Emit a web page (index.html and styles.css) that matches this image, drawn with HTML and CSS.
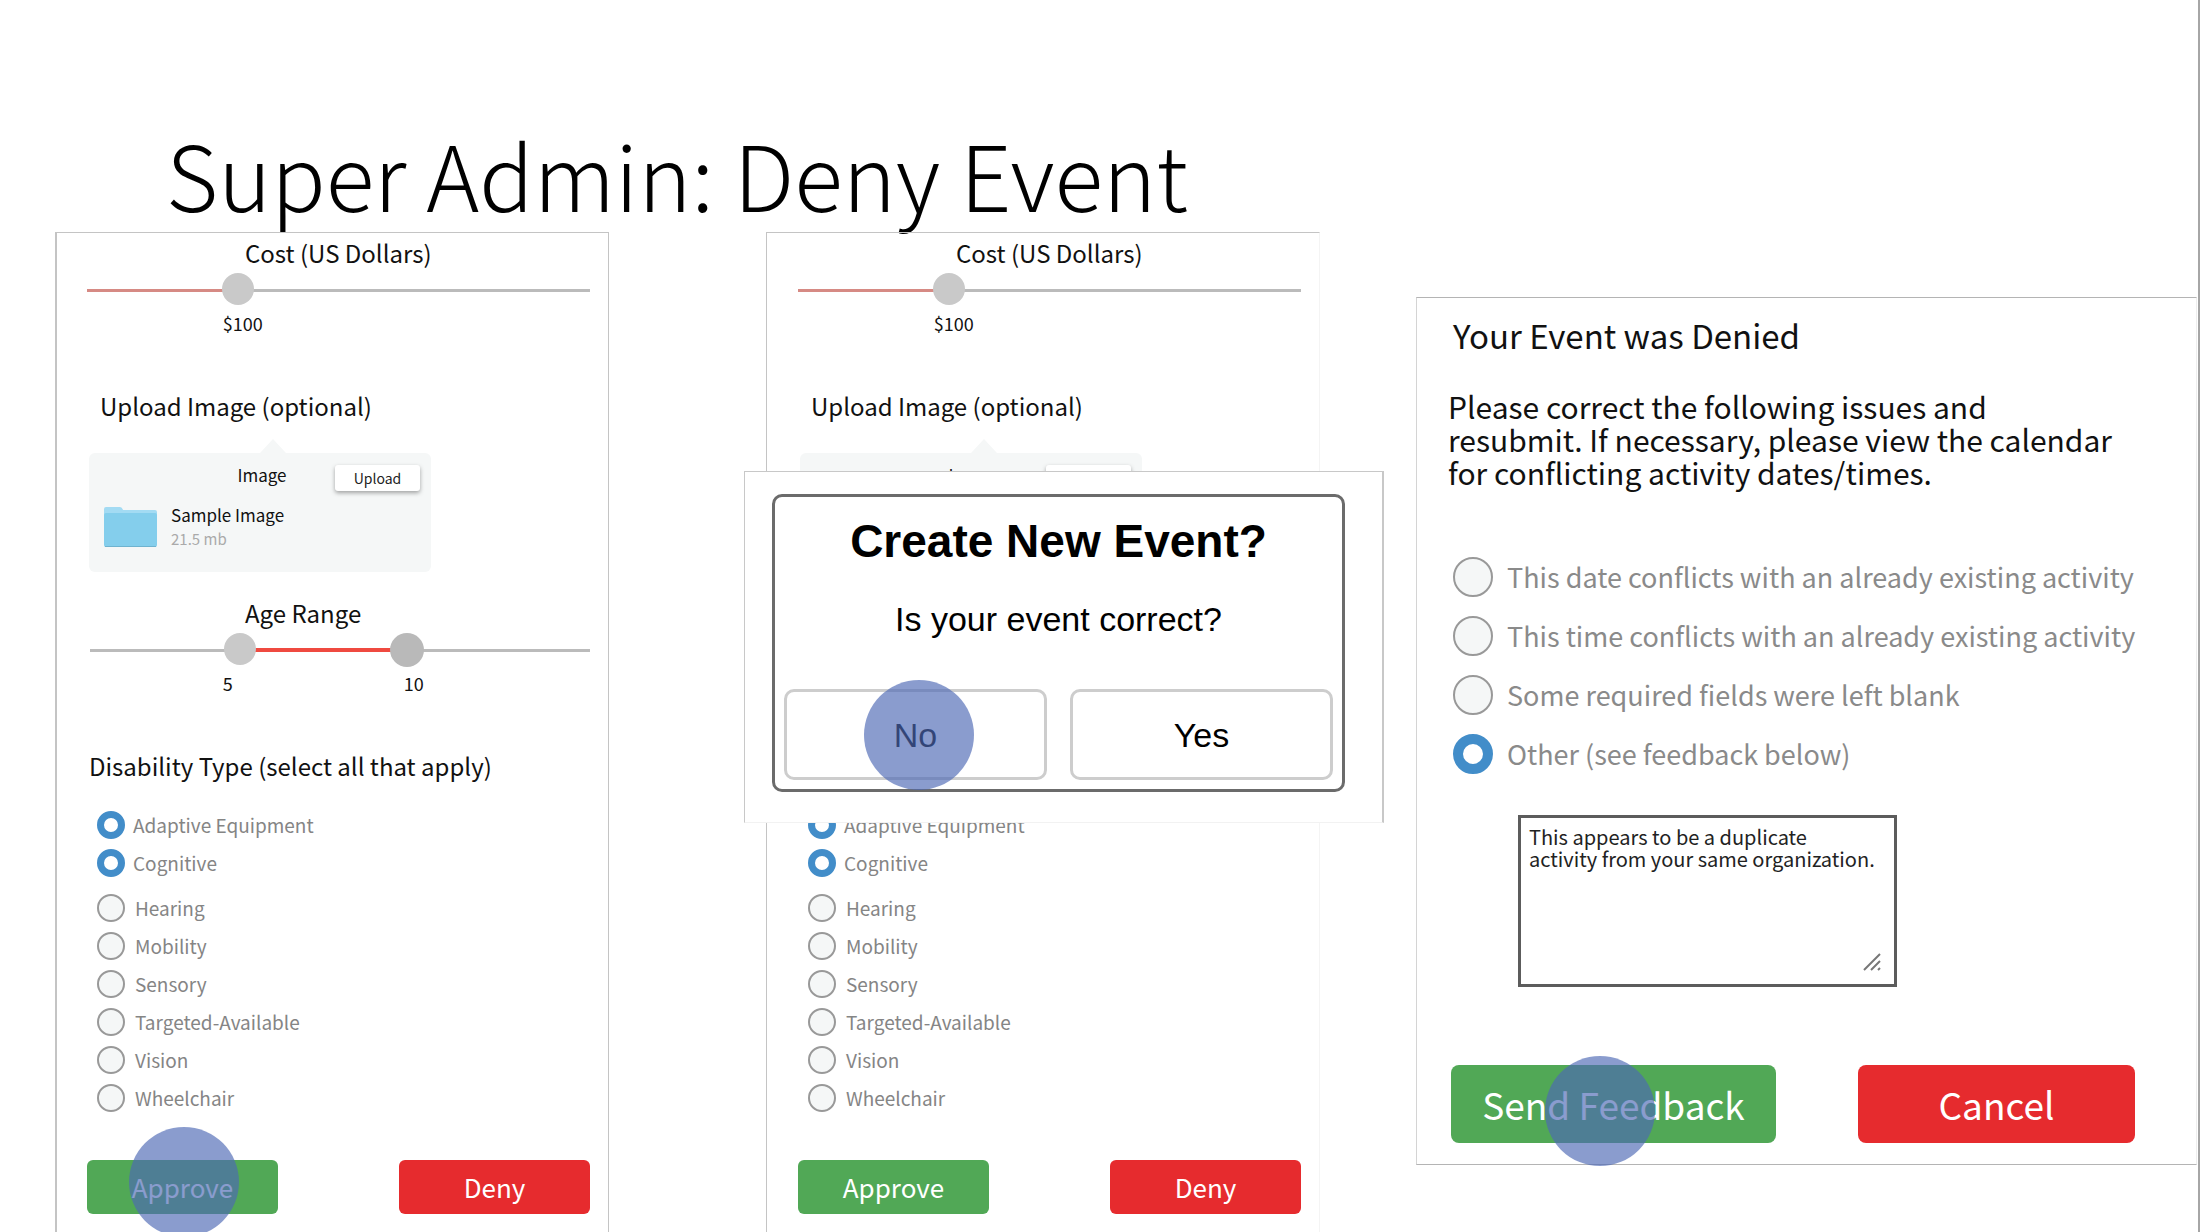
FILE: index.html
```html
<!DOCTYPE html>
<html lang="en">
<head>
<meta charset="utf-8">
<title>Super Admin: Deny Event</title>
<link rel="stylesheet" href="styles.css">
</head>
<body>
<main class="slide">
  <h1 class="slide-title">Super Admin: Deny Event</h1>
  <div class="screens">

    <form class="panel panel-first">
      <label class="heading heading-slider" for="cost-a">Cost (US Dollars)</label>
      <div class="range"><input class="slider slider-cost" id="cost-a" type="range" min="0" max="350" value="100"></div>
      <div class="values"><span>$100</span></div>
      <h2 class="heading heading-upload">Upload Image (optional)</h2>
      <div class="card">
        <div class="card-head"><span class="card-title">Image</span><button class="upload" type="button">Upload</button></div>
        <div class="file">
          <svg class="folder" viewBox="0 0 53 42" aria-hidden="true"><path class="folder-tab" d="M0 3Q0 1 2 1H16Q18 1 19 4H51Q53 4 53 6V14H0Z"/><rect class="folder-body" y="7" width="53" height="34" rx="2"/><path class="folder-edge" d="M1 40.500H52"/></svg>
          <div class="file-text"><span class="file-name">Sample Image</span><span class="file-size">21.5 mb</span></div>
        </div>
      </div>
      <h2 class="heading heading-slider heading-age">Age Range</h2>
      <div class="range range-double">
        <input class="slider slider-age-from" type="range" min="1" max="15" value="5" aria-label="Youngest age">
        <input class="slider slider-age-to" type="range" min="1" max="15" value="10" aria-label="Oldest age">
      </div>
      <div class="values"><span class="value-from">5</span><span>10</span></div>
      <h2 class="heading heading-types">Disability Type (select all that apply)</h2>
      <div class="options">
        <label class="option option-on"><input class="tick" type="checkbox" checked>Adaptive Equipment</label>
        <label class="option option-on option-last-on"><input class="tick" type="checkbox" checked>Cognitive</label>
        <label class="option"><input class="tick" type="checkbox">Hearing</label>
        <label class="option"><input class="tick" type="checkbox">Mobility</label>
        <label class="option"><input class="tick" type="checkbox">Sensory</label>
        <label class="option"><input class="tick" type="checkbox">Targeted-Available</label>
        <label class="option"><input class="tick" type="checkbox">Vision</label>
        <label class="option"><input class="tick" type="checkbox">Wheelchair</label>
      </div>
      <div class="actions">
        <button class="action approve" type="button">Approve<span class="tap"></span></button>
        <button class="action deny" type="button">Deny</button>
      </div>
    </form>

    <form class="panel panel-second">
      <label class="heading heading-slider" for="cost-b">Cost (US Dollars)</label>
      <div class="range"><input class="slider slider-cost" id="cost-b" type="range" min="0" max="350" value="100"></div>
      <div class="values"><span>$100</span></div>
      <h2 class="heading heading-upload">Upload Image (optional)</h2>
      <div class="card">
        <div class="card-head"><span class="card-title">Image</span><button class="upload" type="button">Upload</button></div>
      </div>
      <div class="options options-covered">
        <label class="option option-on"><input class="tick" type="checkbox" checked>Adaptive Equipment</label>
        <label class="option option-on option-last-on"><input class="tick" type="checkbox" checked>Cognitive</label>
        <label class="option"><input class="tick" type="checkbox">Hearing</label>
        <label class="option"><input class="tick" type="checkbox">Mobility</label>
        <label class="option"><input class="tick" type="checkbox">Sensory</label>
        <label class="option"><input class="tick" type="checkbox">Targeted-Available</label>
        <label class="option"><input class="tick" type="checkbox">Vision</label>
        <label class="option"><input class="tick" type="checkbox">Wheelchair</label>
      </div>
      <div class="actions">
        <button class="action approve" type="button">Approve</button>
        <button class="action deny" type="button">Deny</button>
      </div>
      <section class="overlay" role="dialog" aria-labelledby="ask">
        <div class="dialog">
          <h2 class="dialog-title" id="ask">Create New Event?</h2>
          <p class="dialog-text">Is your event correct?</p>
          <div class="dialog-actions">
            <button class="choice" type="button">No<span class="tap tap-choice"></span></button>
            <button class="choice" type="button">Yes</button>
          </div>
        </div>
      </section>
    </form>

    <form class="denied">
      <h2 class="denied-title">Your Event was Denied</h2>
      <p class="denied-text">Please correct the following issues and<br>resubmit. If necessary, please view the calendar<br>for conflicting activity dates/times.</p>
      <div class="reasons">
        <label class="reason"><input class="tick tick-large" type="radio" name="reason">This date conflicts with an already existing activity</label>
        <label class="reason"><input class="tick tick-large" type="radio" name="reason">This time conflicts with an already existing activity</label>
        <label class="reason"><input class="tick tick-large" type="radio" name="reason">Some required fields were left blank</label>
        <label class="reason"><input class="tick tick-large" type="radio" name="reason" checked>Other (see feedback below)</label>
      </div>
      <div class="feedback">
        <textarea class="feedback-box" aria-label="Feedback">This appears to be a duplicate
activity from your same organization.</textarea>
        <svg class="grip" viewBox="0 0 18 18" aria-hidden="true"><path d="M1 17L17 1M8 17L17 8M15 17L17 15"/></svg>
      </div>
      <div class="denied-actions">
        <button class="big approve" type="button">Send Feedback<span class="tap tap-send"></span></button>
        <button class="big deny" type="button">Cancel</button>
      </div>
    </form>

  </div>
</main>
</body>
</html>
```
FILE: styles.css
```css
* { box-sizing: border-box; }

body {
  margin: 0;
  background: #fff;
  color: #111;
  font-family: "Noto Sans CJK SC", "Open Sans", sans-serif;
}

h1, h2, p { margin: 0; font-weight: 400; }

button, textarea { font-family: inherit; }

.slide {
  min-height: 100vh;
  overflow: clip;
  padding-top: 120px;
  border-right: 2px solid #a6a6a6;
}

.slide-title {
  height: 112px;
  padding-left: 166px;
  color: #000;
  font-size: 90px;
  font-weight: 300;
  line-height: 106px;
  white-space: nowrap;
}

.screens {
  display: grid;
  grid-template-columns:
    minmax(0, 55fr) minmax(0, 554fr) minmax(0, 157fr) minmax(0, 554fr)
    minmax(0, 96fr) minmax(0, 781fr) minmax(0, 1fr);
  align-items: start;
}

/* Event form, shown twice */
.panel {
  position: relative;
  padding: 4px 18px 18px 31px;
  border: 1px solid #c4c4c4;
  border-bottom: 0;
}
.panel-first { grid-column: 2; border-left-width: 2px; padding-left: 30px; }
.panel-second { grid-column: 4; border-right-color: #f4f4f4; }

.heading {
  display: block;
  font-size: 24px;
  line-height: 32px;
  white-space: nowrap;
}
.heading-slider { margin-left: 158px; }
.heading-upload { margin: 55px 0 31px 13px; }
.heading-age { margin-top: 25px; }
.heading-types { margin: 55px 0 29px 2px; }

.range { display: grid; height: 34px; margin: 4px 0; }
.range-double { margin-left: 3px; }

.slider {
  grid-area: 1 / 1;
  width: 100%;
  height: 34px;
  margin: 0;
  appearance: none;
  background: none;
}
.slider::-webkit-slider-runnable-track {
  display: flex;
  align-items: center;
  height: 34px;
  background: linear-gradient(#bbb, #bbb) center / 100% 3px no-repeat;
}
.slider::-webkit-slider-thumb {
  width: 32px;
  height: 32px;
  appearance: none;
  border-radius: 50%;
  background: #c9c9c9;
}
.slider-cost::-webkit-slider-runnable-track {
  background:
    linear-gradient(90deg, #d68a84 30%, #bbb 30%) center / 100% 3px no-repeat;
}
.slider-age-from::-webkit-slider-runnable-track {
  background:
    linear-gradient(90deg, transparent 32%, #ef4a40 32% 62%, transparent 62%) center / 100% 4px no-repeat,
    linear-gradient(#bbb, #bbb) center / 100% 3px no-repeat;
}
.slider-age-to { pointer-events: none; }
.slider-age-to::-webkit-slider-runnable-track { background: none; }
.slider-age-to::-webkit-slider-thumb {
  width: 34px;
  height: 34px;
  background: #b9b9b9;
  pointer-events: auto;
}

.values {
  display: flex;
  padding-left: 27%;
  font-size: 18px;
  line-height: 24px;
}
.value-from { width: 181px; }

.card {
  position: relative;
  width: 342px;
  height: 119px;
  margin-left: 2px;
  padding: 12px 11px 0 15px;
  border-radius: 6px;
  background: #f5f7f7;
}
.card::before {
  content: "";
  position: absolute;
  left: 171px;
  top: -14px;
  width: 26px;
  height: 14px;
  background: #f5f7f7;
  clip-path: polygon(50% 0, 100% 100%, 0 100%);
}
.card-head { display: grid; grid-template-columns: 1fr auto 1fr; }
.card-title { grid-column: 2; font-size: 17px; line-height: 20px; }
.upload {
  grid-column: 3;
  justify-self: end;
  width: 85px;
  height: 26px;
  padding: 0;
  border: 0;
  border-radius: 3px;
  background: #fff;
  box-shadow: 0 2px 4px rgba(0, 0, 0, .35);
  color: #222;
  font-size: 14px;
  line-height: 26px;
}
.file { display: flex; align-items: center; gap: 14px; margin-top: 12px; }
.folder { width: 53px; height: 42px; }
.folder-tab { fill: #a3dbf3; }
.folder-body { fill: #84ceec; }
.folder-edge { stroke: #6fb3cf; stroke-width: 1; }
.file-text { display: flex; flex-direction: column; line-height: 24px; }
.file-name { font-size: 17px; }
.file-size { color: #aaa; font-size: 15px; }

.options {
  display: flex;
  flex-direction: column;
  align-items: start;
  gap: 10px;
  padding-left: 10px;
}
/* Clears the part of the form that the dialog hides */
.options-covered { margin-top: 239px; }
.option {
  display: flex;
  align-items: center;
  gap: 10px;
  height: 28px;
  color: #858585;
  font-size: 19px;
  line-height: 28px;
}
.option-on { gap: 8px; }
.option-last-on { margin-bottom: 7px; }

.tick {
  flex: none;
  width: 28px;
  height: 28px;
  margin: 0;
  appearance: none;
  border: 2px solid #999;
  border-radius: 50%;
  background: #f5f7f7;
}
.tick:checked { border: 7px solid #428dc9; background: #fff; }
.tick-large { width: 40px; height: 40px; }
.tick-large:checked { border-width: 10px; }

.actions { display: flex; justify-content: space-between; margin-top: 48px; }
.action {
  position: relative;
  width: 191px;
  height: 54px;
  padding: 0;
  border: 0;
  border-radius: 6px;
  color: #fff;
  font-size: 26px;
  line-height: 54px;
}
.approve { background: #51a856; }
.deny { background: #e62b2e; }

/* Tap marker laid over the pressed button */
.tap {
  position: absolute;
  left: 42px;
  top: -33px;
  width: 110px;
  height: 110px;
  border-radius: 50%;
  background: rgba(78, 104, 180, .66);
}
.tap-choice { left: 77px; top: -12px; }
.tap-send { left: 94px; top: -9px; }

/* Confirmation over the second form */
.overlay {
  position: absolute;
  left: -23px;
  top: 238px;
  width: 640px;
  padding: 22px 37px 30px 27px;
  border: 1px solid #c8c8c8;
  border-right-width: 2px;
  border-bottom-color: #f2f2f2;
  background: #fff;
  color: #000;
  font-family: "Liberation Sans", Arial, sans-serif;
  text-align: center;
}
.dialog { padding: 18px 9px 9px; border: 3px solid #6b6b6b; border-radius: 10px; }
.dialog-title { font-size: 46px; font-weight: 700; line-height: 52px; }
.dialog-text { margin-top: 32px; font-size: 34px; line-height: 40px; }
.dialog-actions {
  display: grid;
  grid-template-columns: 1fr 1fr;
  gap: 23px;
  margin-top: 50px;
}
.choice {
  position: relative;
  height: 91px;
  padding: 2px 0 0;
  border: 3px solid #cdcdcd;
  border-radius: 10px;
  background: #fff;
  color: #000;
  font-size: 34px;
}

/* Denial notice */
.denied {
  grid-column: 6;
  margin-top: 65px;
  padding: 17px 30px 21px 31px;
  border: 1px solid #b4b4b4;
  border-left-color: #d4d4d4;
  border-right-color: #eee;
}
.denied-title { margin-left: 5px; font-size: 33px; line-height: 40px; }
.denied-text { margin-top: 35px; font-size: 30px; line-height: 33px; white-space: nowrap; }
.reasons {
  display: flex;
  flex-direction: column;
  align-items: start;
  gap: 19px;
  margin: 68px 0 0 5px;
}
.reason {
  display: flex;
  align-items: center;
  gap: 14px;
  color: #8a8a8a;
  font-size: 27px;
  line-height: 40px;
  white-space: nowrap;
}
.feedback { position: relative; width: 379px; margin: 41px 0 0 70px; }
.feedback-box {
  display: block;
  width: 100%;
  height: 172px;
  padding: 8px;
  border: 3px solid #5c5c5c;
  background: #fff;
  color: #222;
  font-size: 20px;
  line-height: 22px;
  resize: none;
  overflow: hidden;
  white-space: pre;
}
.grip {
  position: absolute;
  right: 16px;
  bottom: 16px;
  width: 18px;
  height: 18px;
  fill: none;
  stroke: #777;
  stroke-width: 2;
}
.denied-actions { display: flex; gap: 82px; margin: 78px 0 0 3px; }
.big {
  position: relative;
  width: 325px;
  height: 78px;
  padding: 0;
  border: 0;
  border-radius: 8px;
  color: #fff;
  font-size: 37px;
  line-height: 78px;
}
.big.deny { width: 277px; }
```
